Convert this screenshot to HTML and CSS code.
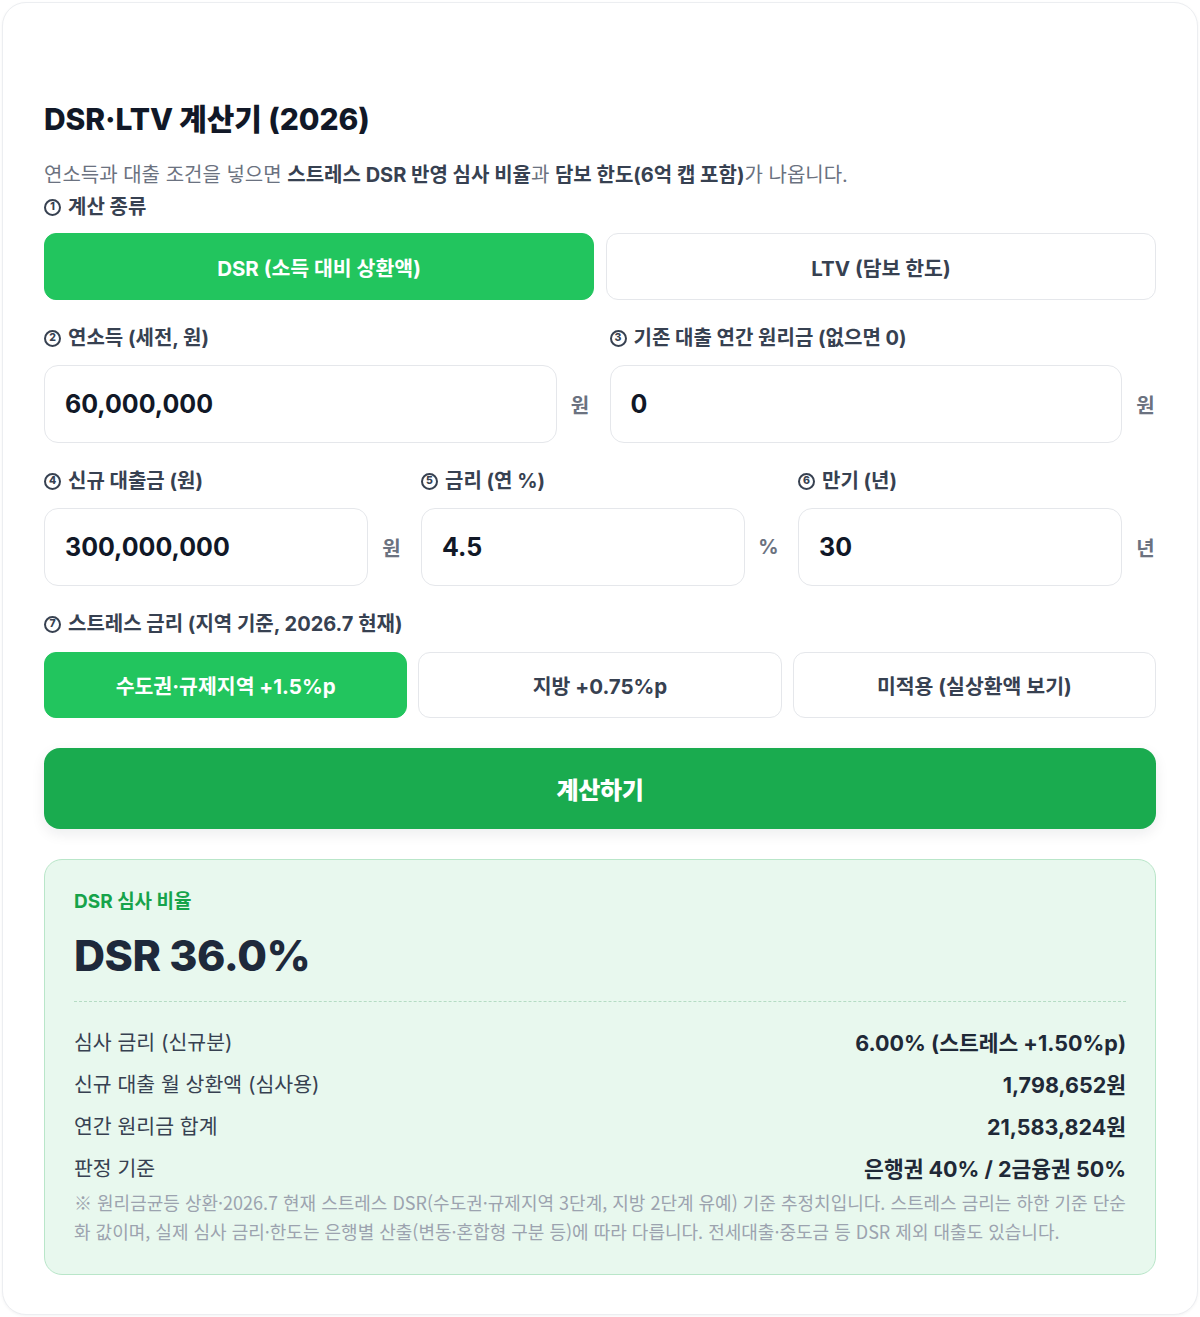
FILE: index.html
```html
<!DOCTYPE html>
<html lang="ko">
<head>
<meta charset="utf-8">
<title>DSR·LTV 계산기 (2026)</title>
<link rel="stylesheet" href="styles.css">
</head>
<body>
<div class="card">
  <h1 class="title">DSR·LTV 계산기 (2026)</h1>
  <p class="desc">연소득과 대출 조건을 넣으면 <b>스트레스 DSR 반영 심사 비율</b>과 <b>담보 한도(6억 캡 포함)</b>가 나옵니다.</p>

  <div class="label"><span class="num">1</span>계산 종류</div>
  <div class="toggle-row two">
    <button class="toggle active">DSR (소득 대비 상환액)</button>
    <button class="toggle">LTV (담보 한도)</button>
  </div>

  <div class="grid two">
    <div class="field">
      <div class="label"><span class="num">2</span>연소득 (세전, 원)</div>
      <div class="input-wrap">
        <input class="input" type="text" value="60,000,000">
        <span class="unit">원</span>
      </div>
    </div>
    <div class="field">
      <div class="label"><span class="num">3</span>기존 대출 연간 원리금 (없으면 0)</div>
      <div class="input-wrap">
        <input class="input" type="text" value="0">
        <span class="unit">원</span>
      </div>
    </div>
  </div>

  <div class="grid three">
    <div class="field">
      <div class="label"><span class="num">4</span>신규 대출금 (원)</div>
      <div class="input-wrap">
        <input class="input" type="text" value="300,000,000">
        <span class="unit">원</span>
      </div>
    </div>
    <div class="field">
      <div class="label"><span class="num">5</span>금리 (연 %)</div>
      <div class="input-wrap">
        <input class="input" type="text" value="4.5">
        <span class="unit">%</span>
      </div>
    </div>
    <div class="field">
      <div class="label"><span class="num">6</span>만기 (년)</div>
      <div class="input-wrap">
        <input class="input" type="text" value="30">
        <span class="unit">년</span>
      </div>
    </div>
  </div>

  <div class="label label-gap"><span class="num">7</span>스트레스 금리 (지역 기준, 2026.7 현재)</div>
  <div class="toggle-row three">
    <button class="toggle small active">수도권·규제지역 +1.5%p</button>
    <button class="toggle small">지방 +0.75%p</button>
    <button class="toggle small">미적용 (실상환액 보기)</button>
  </div>

  <button class="calc">계산하기</button>

  <div class="result">
    <div class="result-kicker">DSR 심사 비율</div>
    <div class="result-main">DSR 36.0%</div>
    <div class="result-rows">
      <div class="row"><span class="row-k">심사 금리 (신규분)</span><span class="row-v">6.00% (스트레스 +1.50%p)</span></div>
      <div class="row"><span class="row-k">신규 대출 월 상환액 (심사용)</span><span class="row-v">1,798,652원</span></div>
      <div class="row"><span class="row-k">연간 원리금 합계</span><span class="row-v">21,583,824원</span></div>
      <div class="row"><span class="row-k">판정 기준</span><span class="row-v">은행권 40% / 2금융권 50%</span></div>
    </div>
    <p class="note">※ 원리금균등 상환·2026.7 현재 스트레스 DSR(수도권·규제지역 3단계, 지방 2단계 유예) 기준 추정치입니다. 스트레스 금리는 하한 기준 단순화 값이며, 실제 심사 금리·한도는 은행별 산출(변동·혼합형 구분 등)에 따라 다릅니다. 전세대출·중도금 등 DSR 제외 대출도 있습니다.</p>
  </div>
</div>
</body>
</html>
```

FILE: styles.css
```css
* { box-sizing: border-box; }

html, body {
  margin: 0;
  padding: 0;
  background: #ffffff;
}

body {
  font-family: Inter, "Noto Sans CJK KR", "Noto Sans", sans-serif;
  color: #1f2937;
  padding: 2px;
}

.card {
  border: 1px solid #eceef1;
  border-radius: 24px;
  background: #ffffff;
  padding: 96px 41px 39px;
  box-shadow: 0 1px 3px rgba(15, 23, 42, 0.05);
}

.title {
  margin: 0;
  font-size: 30px;
  line-height: 40px;
  font-weight: 800;
  color: #111827;
  letter-spacing: -0.1px;
}

.desc {
  margin: 20px 0 0;
  font-size: 20px;
  line-height: 32px;
  color: #6b7280;
}

.desc b {
  font-weight: 700;
  color: #374151;
}

.label {
  display: flex;
  align-items: center;
  font-size: 20px;
  line-height: 32px;
  font-weight: 700;
  color: #374151;
}

.num {
  display: inline-flex;
  align-items: center;
  justify-content: center;
  flex: none;
  width: 17px;
  height: 17px;
  margin-right: 7px;
  border: 2px solid #374151;
  border-radius: 50%;
  font-family: Inter, sans-serif;
  font-size: 10.5px;
  line-height: 1;
  font-weight: 800;
  color: #374151;
}

.label-gap {
  margin-top: 22px;
}

.toggle-row {
  display: grid;
  margin-top: 10px;
}

.toggle-row.two {
  grid-template-columns: repeat(2, minmax(0, 1fr));
  gap: 12px;
}

.toggle-row.three {
  grid-template-columns: repeat(3, minmax(0, 1fr));
  gap: 11px;
  margin-top: 12px;
}

.toggle {
  height: 67px;
  border: 1.5px solid #e5e7eb;
  border-radius: 12px;
  background: #ffffff;
  font-family: inherit;
  font-size: 20.5px;
  font-weight: 700;
  color: #374151;
  cursor: pointer;
}

.toggle.small {
  height: 66px;
}

.toggle.active {
  background: #22c55e;
  border-color: #22c55e;
  color: #ffffff;
}

.grid {
  display: grid;
  column-gap: 19px;
  margin-top: 22px;
}

.grid.two {
  grid-template-columns: repeat(2, minmax(0, 1fr));
}

.grid.three {
  grid-template-columns: repeat(3, minmax(0, 1fr));
}

.field {
  min-width: 0;
}

.field .label {
  margin-bottom: 11px;
}

.input-wrap {
  display: flex;
  align-items: center;
  gap: 13px;
}

.input {
  flex: 1 1 0;
  width: 0;
  min-width: 0;
  height: 78px;
  border: 1.5px solid #e5e7eb;
  border-radius: 14px;
  padding: 0 20px;
  font-family: inherit;
  font-size: 25px;
  font-weight: 700;
  color: #111827;
  background: #ffffff;
  outline: none;
}

.unit {
  flex: none;
  width: 21px;
  text-align: center;
  font-size: 20px;
  font-weight: 700;
  color: #6b7280;
}

.calc {
  display: block;
  width: 100%;
  height: 81px;
  margin-top: 30px;
  border: none;
  border-radius: 16px;
  background: #1aab4f;
  color: #ffffff;
  font-family: inherit;
  font-size: 24px;
  font-weight: 800;
  letter-spacing: -0.3px;
  box-shadow: 0 5px 14px rgba(15, 23, 42, 0.08);
  cursor: pointer;
}

.result {
  margin-top: 30px;
  border: 1.5px solid #b9e6c9;
  border-radius: 18px;
  background: #e8f8ee;
  padding: 29px 29px 28px;
}

.result-kicker {
  font-size: 19px;
  line-height: 26px;
  font-weight: 700;
  color: #16a34a;
}

.result-main {
  margin-top: 14px;
  font-size: 43px;
  line-height: 52px;
  font-weight: 800;
  color: #1e293b;
  letter-spacing: -0.5px;
}

.result-rows {
  margin-top: 20px;
  border-top: 1.5px dashed #b5dcc4;
  padding-top: 18px;
}

.row {
  display: flex;
  justify-content: space-between;
  align-items: center;
  height: 42px;
  font-size: 20.5px;
}

.row-k {
  color: #374151;
}

.row-v {
  font-size: 21.5px;
  font-weight: 700;
  color: #1f2937;
}

.note {
  margin: 0;
  font-family: "Noto Sans CJK KR", sans-serif;
  font-size: 18px;
  line-height: 29px;
  color: #9ca3af;
}
```
